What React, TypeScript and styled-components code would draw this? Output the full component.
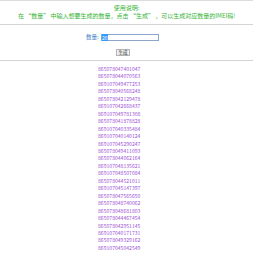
import React from "react";
import styled, { createGlobalStyle } from "styled-components";

const GlobalStyle = createGlobalStyle`
  body {
    margin: 0;
    background: #ffffff;
    font-family: "Noto Sans CJK SC", "Noto Sans", sans-serif;
  }
`;

const Page = styled.div`
  width: 253px;
  border-top: 1px solid #dcdcdc;
`;

const Notice = styled.div`
  color: #36b336;
  font-size: 6px;
  line-height: 8px;
  text-align: center;
  padding: 3px 0 4px;
  border-bottom: 1px solid #d4d4d4;
`;

const Form = styled.div`
  display: flex;
  flex-direction: column;
  align-items: flex-start;
  padding: 9px 0 4px 86px;
  gap: 8px;
  border-bottom: 1px solid #d4d4d4;
`;

const Field = styled.div`
  display: flex;
  align-items: center;
`;

const Label = styled.label`
  width: 15px;
  color: #3f7fc4;
  font-size: 5.5px;
  line-height: 7px;
`;

const Input = styled.div`
  width: 56px;
  height: 5px;
  border: 1px solid #8aa6c9;
  font-size: 5px;
  line-height: 5px;
  padding: 0;
  color: #333;
`;

const Selected = styled.span`
  background: #3399ff;
  color: #fff;
`;

const Button = styled.button`
  width: 14px;
  height: 7px;
  margin-left: 30px;
  padding: 0;
  border: 1px solid #b5b5b5;
  background: #eeeeee;
  font-family: inherit;
  font-size: 4.5px;
  line-height: 5px;
  color: #333;
`;

const List = styled.div`
  display: flex;
  flex-direction: column;
  align-items: flex-start;
  padding: 4px 0 0 98px;
`;

const Code = styled.div`
  color: #9b4fd4;
  font-size: 5.1px;
  line-height: 7.45px;
`;

const codes = [
  "865078047401047",
  "865078044070563",
  "869107049477253",
  "865078040568248",
  "865078042129478",
  "869107042668437",
  "869107049781308",
  "865078041878828",
  "869107040335484",
  "869107040140124",
  "869107045290247",
  "865078049411093",
  "865078044062164",
  "869107048135621",
  "869107048507084",
  "865078044521011",
  "869107045147397",
  "865078047565650",
  "865078048740062",
  "865078048681803",
  "865078044467454",
  "865078042951145",
  "869107040171731",
  "865078049329162",
  "869107045042549",
];

export default function App() {
  return (
    <Page>
      <GlobalStyle />
      <Notice>
        <div>使用说明:</div>
        <div>在 “数量” 中输入想要生成的数量，点击 “生成” ，可以生成对应数量的IMEI码!</div>
      </Notice>
      <Form>
        <Field>
          <Label>数量:</Label>
          <Input>
            <Selected>20</Selected>
          </Input>
        </Field>
        <Button>生成</Button>
      </Form>
      <List>
        {codes.map((c) => (
          <Code key={c}>{c}</Code>
        ))}
      </List>
    </Page>
  );
}
